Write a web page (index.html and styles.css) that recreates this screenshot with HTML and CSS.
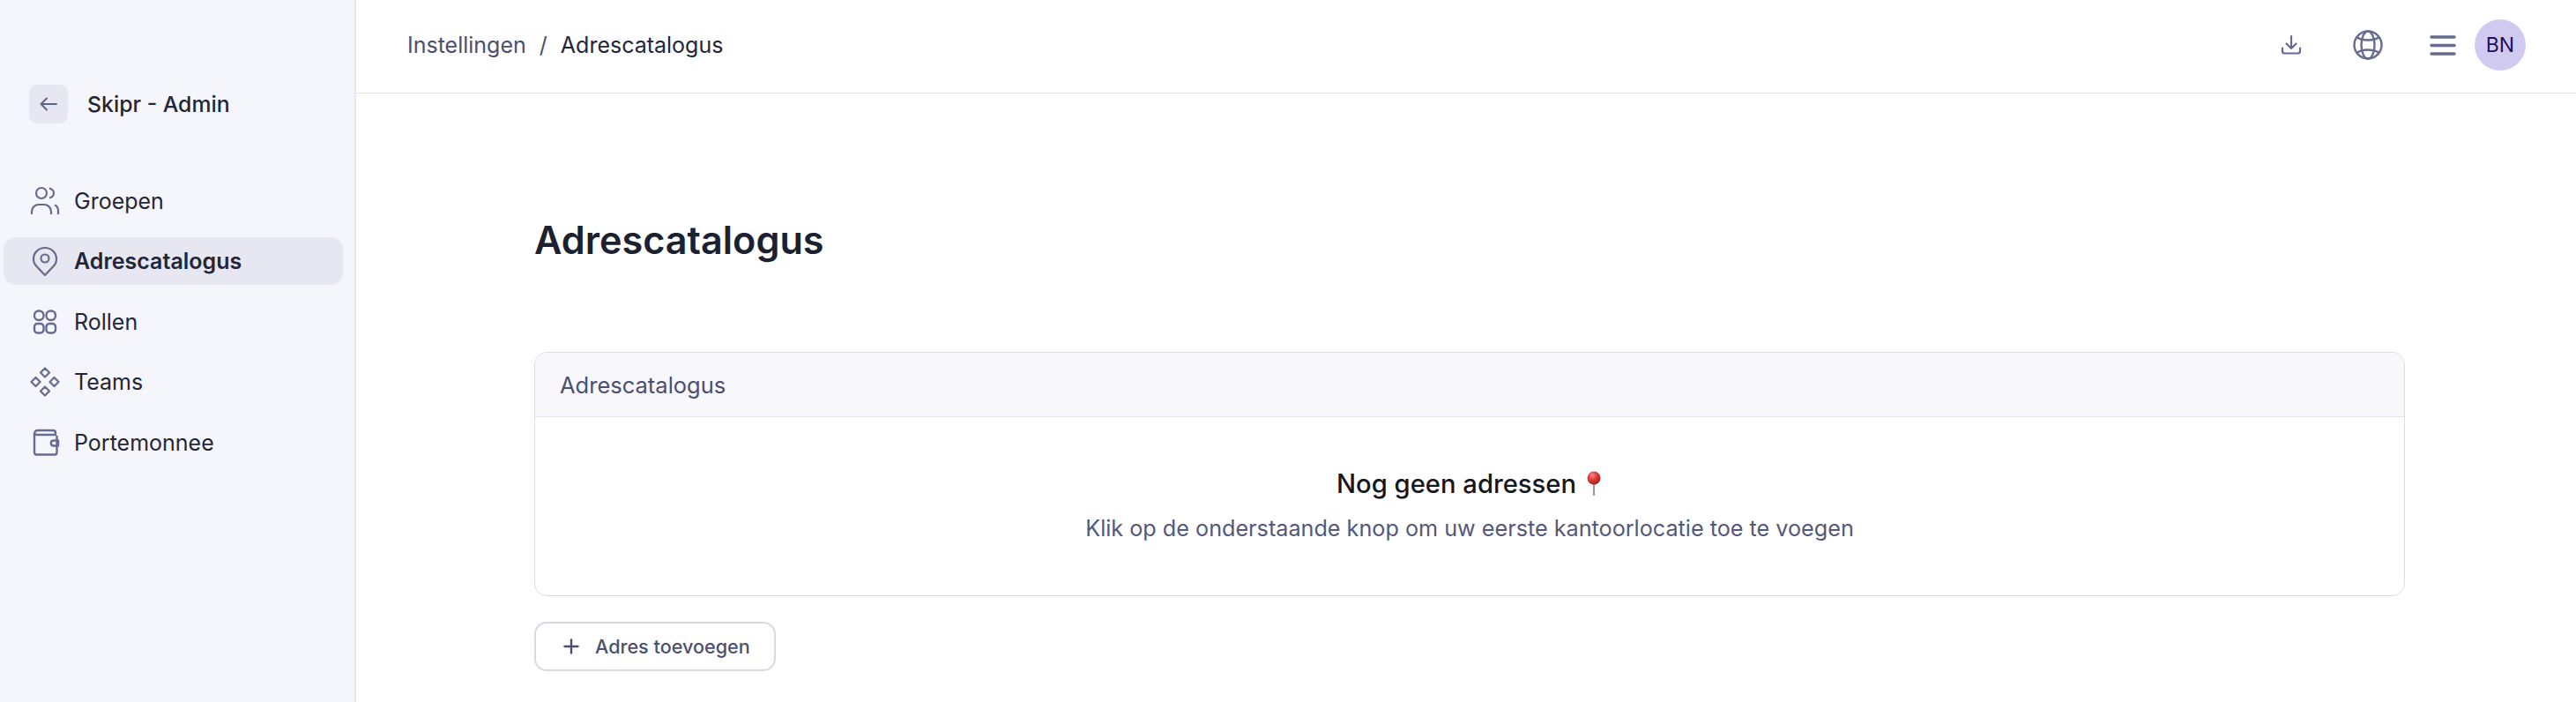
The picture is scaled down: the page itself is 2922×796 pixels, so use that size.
FILE: index.html

```html
<!DOCTYPE html>
<html lang="nl">
<head>
  <meta charset="UTF-8" />
  <meta name="viewport" content="width=device-width, initial-scale=1" />
  <title>Adrescatalogus</title>
  <link rel="stylesheet" href="styles.css">
</head>
<body>
  <div class="app">

    <aside class="sidebar">
      <div class="sidebar-head">
        <button class="back-btn" aria-label="Terug">
          <svg width="22" height="22" viewBox="0 0 22 22" fill="none" stroke="#5f6488" stroke-width="2" stroke-linecap="round" stroke-linejoin="round"><path d="M20 11H2.500M9 4.500 2.500 11 9 17.500"/></svg>
        </button>
        <span class="sidebar-title">Skipr - Admin</span>
      </div>

      <nav class="nav">
        <a class="nav-item">
          <svg class="nav-icon" viewBox="0 0 34 34" fill="none" stroke="#666c8f" stroke-width="2.200"><circle cx="13" cy="8" r="6"/><path d="M22 2.500c3.500 1 5 3.200 5 5.500s-1.500 4.500-5 5.500M2 32v-3c0-5 4-8 8-8h6c4 0 8 3 8 8v3M28 21.500c2.500.8 4 3.500 4 6.500v4"/></svg>
          <span>Groepen</span>
        </a>
        <a class="nav-item active">
          <svg class="nav-icon" viewBox="0 0 34 34" fill="none" stroke="#666c8f" stroke-width="2.200" stroke-linejoin="round"><path d="M17 33 7.500 23C4.500 20 4 17.500 4 14.500 4 7.500 9.800 2 17 2s13 5.500 13 12.500c0 3-.5 5.500-3.500 8.500Z"/><circle cx="17" cy="14" r="4.500"/></svg>
          <span>Adrescatalogus</span>
        </a>
        <a class="nav-item">
          <svg class="nav-icon" viewBox="0 0 34 34" fill="none" stroke="#666c8f" stroke-width="2.400"><rect x="5" y="4.500" width="10.500" height="10.500" rx="5"/><rect x="18.500" y="4.500" width="10.500" height="10.500" rx="5"/><rect x="5" y="19" width="10.500" height="10.500" rx="3.500"/><rect x="18.500" y="19" width="10.500" height="10.500" rx="3.500"/></svg>
          <span>Rollen</span>
        </a>
        <a class="nav-item">
          <svg class="nav-icon" viewBox="0 0 34 34" fill="none" stroke="#666c8f" stroke-width="2.200" stroke-linejoin="round"><path d="m17 1.500 5 5-5 5-5-5ZM17 22.500l5 5-5 5-5-5ZM6.500 12l5 5-5 5-5-5ZM27.500 12l5 5-5 5-5-5Z"/></svg>
          <span>Teams</span>
        </a>
        <a class="nav-item">
          <svg class="nav-icon" viewBox="0 0 34 34" fill="none" stroke="#666c8f" stroke-width="2.400" stroke-linejoin="round"><path d="M5 7c0-2.500 1.500-4 4-4h17c2 0 3 1 3 3v2H9c-2.500 0-4-.5-4-2v22c0 1.500 1 2.500 2.500 2.500H28c1.500 0 2.500-1 2.500-2.500V9"/><path d="M32 14.500h-5c-2 0-3.200 1.200-3.200 3s1.200 3 3.200 3h5Z"/></svg>
          <span>Portemonnee</span>
        </a>
      </nav>
    </aside>

    <div class="main">
      <header class="topbar">
        <div class="breadcrumb">
          <span class="crumb-link">Instellingen</span>
          <span class="crumb-sep">/</span>
          <span class="crumb-current">Adrescatalogus</span>
        </div>
        <div class="top-actions">
          <svg class="icon-download" width="26" height="26" viewBox="0 0 26 26" fill="none" stroke="#666c8f" stroke-width="2.200" stroke-linecap="round" stroke-linejoin="round"><path d="M13 3v14M7.500 11.500 13 17l5.500-5.500M3 16.500V20c0 1.500 1 2.500 2.500 2.500h15c1.500 0 2.500-1 2.500-2.500v-3.500"/></svg>
          <svg class="icon-globe" width="34" height="34" viewBox="0 0 34 34" fill="none" stroke="#666c8f" stroke-width="2.400"><circle cx="17" cy="17" r="15.500"/><ellipse cx="17" cy="17" rx="7.500" ry="15.500"/><path d="M4.500 8c3 2.500 7.500 3.500 12.500 3.500S26.500 10.500 29.500 8M4.500 26c3-2.500 7.500-3.500 12.500-3.500S26.500 23.500 29.500 26"/></svg>
          <svg class="icon-menu" width="30" height="24" viewBox="0 0 30 24" fill="none" stroke="#666c8f" stroke-width="3.500" stroke-linecap="round"><path d="M2 3h26M2 12.500h26M2 22h26"/></svg>
          <div class="avatar">BN</div>
        </div>
      </header>

      <main class="content">
        <h1 class="page-title">Adrescatalogus</h1>

        <section class="card">
          <div class="card-head">Adrescatalogus</div>
          <div class="card-body">
            <div class="empty-title">
              Nog geen adressen
              <svg class="pin" width="20" height="28" viewBox="0 0 20 28">
                <defs>
                  <radialGradient id="ball" cx="38%" cy="30%" r="70%">
                    <stop offset="0" stop-color="#f98a86"/>
                    <stop offset=".5" stop-color="#dd3c38"/>
                    <stop offset="1" stop-color="#a81f20"/>
                  </radialGradient>
                </defs>
                <path d="M10 12v15" stroke="#a49a90" stroke-width="2.200" stroke-linecap="round"/>
                <circle cx="10" cy="8" r="7.500" fill="url(#ball)"/>
              </svg>
            </div>
            <p class="empty-text">Klik op de onderstaande knop om uw eerste kantoorlocatie toe te voegen</p>
          </div>
        </section>

        <button class="add-btn">
          <svg width="18" height="18" viewBox="0 0 18 18" fill="none" stroke="#4b4f70" stroke-width="2.400" stroke-linecap="round"><path d="M9 1.500v15M1.500 9h15"/></svg>
          Adres toevoegen
        </button>
      </main>
    </div>

  </div>
</body>
</html>
```

FILE: styles.css

```css
* {
  box-sizing: border-box;
}
html, body {
  margin: 0;
  height: 100%;
}
body {
  font-family: Inter, "Liberation Sans", sans-serif;
  color: #232639;
  background: #fff;
  overflow: hidden;
}
.app {
  display: flex;
  height: 796px;
}

/* sidebar */
.sidebar {
  width: 404px;
  flex: none;
  background: #f5f6fb;
  border-right: 2px solid #e8e8f0;
  padding: 96px 13px 0 4px;
}
.sidebar-head {
  display: flex;
  align-items: center;
  gap: 22px;
  padding-left: 29px;
}
.back-btn {
  width: 44px;
  height: 44px;
  border: none;
  border-radius: 9px;
  background: #e6e7f0;
  display: flex;
  align-items: center;
  justify-content: center;
  padding: 0;
}
.sidebar-title {
  font-size: 24.8px;
  font-weight: 450;
}
.nav {
  display: flex;
  flex-direction: column;
  gap: 14.5px;
  margin-top: 60.5px;
}
.nav-item {
  display: flex;
  align-items: center;
  gap: 16px;
  height: 54px;
  padding-left: 30px;
  border-radius: 14px;
  font-size: 25px;
}
.nav-item.active {
  background: #e6e7f0;
  font-weight: 600;
}
.nav-icon {
  width: 34px;
  height: 34px;
  flex: none;
}

/* top bar */
.main {
  flex: 1;
  min-width: 0;
}
.topbar {
  height: 106px;
  border-bottom: 1px solid #e4e4ee;
  display: flex;
  align-items: center;
  justify-content: space-between;
  padding: 0 57px 3px 58px;
}
.breadcrumb {
  display: flex;
  align-items: center;
  gap: 15px;
  font-size: 25px;
}
.crumb-link {
  color: #4b4f70;
}
.crumb-sep {
  color: #4b4f70;
}
.top-actions {
  display: flex;
  align-items: center;
}
.icon-download {
  margin-right: 57px;
}
.icon-globe {
  margin-right: 53px;
}
.icon-menu {
  margin-right: 21px;
}
.avatar {
  width: 58px;
  height: 58px;
  border-radius: 50%;
  background: #d0caf0;
  color: #1f0f55;
  font-size: 23px;
  display: flex;
  align-items: center;
  justify-content: center;
}

/* content */
.content {
  padding: 139px 194px 0 202px;
}
.page-title {
  margin: 0 0 100px;
  font-size: 43.2px;
  line-height: 54px;
  font-weight: 600;
  color: #1c2130;
}
.card {
  border: 1px solid #dcdce6;
  border-radius: 14px;
  overflow: hidden;
}
.card-head {
  height: 73px;
  background: #f7f7fc;
  border-bottom: 1px solid #e4e4ee;
  padding: 0 28px;
  display: flex;
  align-items: center;
  font-size: 25.5px;
  color: #4b4f70;
}
.card-body {
  height: 202px;
  display: flex;
  flex-direction: column;
  align-items: center;
  padding-top: 60px;
}
.empty-title {
  display: flex;
  align-items: center;
  gap: 10px;
  height: 30px;
  font-size: 29.2px;
  font-weight: 450;
  color: #14171f;
}
.empty-text {
  margin: 21px 0 0;
  font-size: 25.200px;
  color: #54587a;
}
.add-btn {
  margin-top: 29px;
  width: 274px;
  height: 56px;
  background: #fff;
  border: 2px solid #d9d9e5;
  border-radius: 14px;
  display: flex;
  align-items: center;
  gap: 18px;
  padding: 0 0 0 31px;
  font-family: inherit;
  font-size: 21.6px;
  font-weight: 450;
  color: #4b4f70;
}
```
